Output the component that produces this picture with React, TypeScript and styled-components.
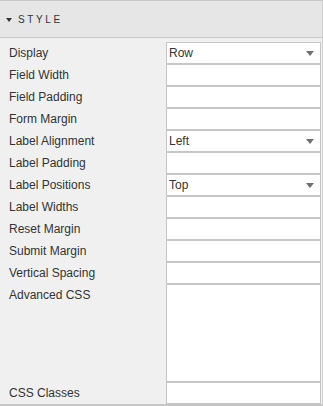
import React from "react";
import styled, { createGlobalStyle } from "styled-components";

const Global = createGlobalStyle`
  html, body { margin: 0; padding: 0; background: #f0f0f0; }
  body { font-family: "Liberation Sans", Arial, sans-serif; }
`;

const Panel = styled.div`
  width: 323px;
  height: 406px;
  box-sizing: border-box;
  border-top: 1px solid #c6c6c6;
  border-right: 1px solid #cfcfcf;
  border-bottom: 2px solid #c6c6c6;
  background: #f0f0f0;
  display: flex;
  flex-direction: column;
  overflow: hidden;
`;

const Header = styled.div`
  height: 37px;
  flex: none;
  box-sizing: border-box;
  background: #e6e6e6;
  border-bottom: 1px solid #c8c8c8;
  display: flex;
  align-items: center;
  padding-left: 6px;
  gap: 6px;
`;

const Caret = styled.span`
  width: 0;
  height: 0;
  border-left: 3.5px solid transparent;
  border-right: 3.5px solid transparent;
  border-top: 4px solid #333;
  margin-top: 1px;
`;

const Title = styled.span`
  font-size: 10px;
  letter-spacing: 2.6px;
  color: #333;
`;

const Form = styled.div`
  display: grid;
  grid-template-columns: 166px 155px;
  padding-top: 4px;
`;

const Label = styled.div<{ $tall?: boolean }>`
  height: ${(p) => (p.$tall ? "98px" : "22px")};
  line-height: 22px;
  padding-left: 9px;
  font-size: 12px;
  color: #333;
  white-space: nowrap;
`;

const Field = styled.div<{ $tall?: boolean }>`
  height: ${(p) => (p.$tall ? "98px" : "22px")};
  box-sizing: border-box;
  border: 1px solid #c6c6c6;
  background: #fff;
  display: flex;
  align-items: center;
  justify-content: space-between;
  padding: 0 6px 0 2px;
  font-size: 12px;
  color: #333;
`;

const Arrow = styled.span`
  width: 0;
  height: 0;
  border-left: 4px solid transparent;
  border-right: 4px solid transparent;
  border-top: 5px solid #707070;
`;

type Row = { label: string; value?: string; select?: boolean; tall?: boolean };

const rows: Row[] = [
  { label: "Display", value: "Row", select: true },
  { label: "Field Width" },
  { label: "Field Padding" },
  { label: "Form Margin" },
  { label: "Label Alignment", value: "Left", select: true },
  { label: "Label Padding" },
  { label: "Label Positions", value: "Top", select: true },
  { label: "Label Widths" },
  { label: "Reset Margin" },
  { label: "Submit Margin" },
  { label: "Vertical Spacing" },
  { label: "Advanced CSS", tall: true },
  { label: "CSS Classes" },
];

export default function App() {
  return (
    <>
      <Global />
      <Panel>
        <Header>
          <Caret />
          <Title>STYLE</Title>
        </Header>
        <Form>
          {rows.map((r) => (
            <React.Fragment key={r.label}>
              <Label $tall={r.tall}>{r.label}</Label>
              <Field $tall={r.tall}>
                <span>{r.value ?? ""}</span>
                {r.select && <Arrow />}
              </Field>
            </React.Fragment>
          ))}
        </Form>
      </Panel>
    </>
  );
}
